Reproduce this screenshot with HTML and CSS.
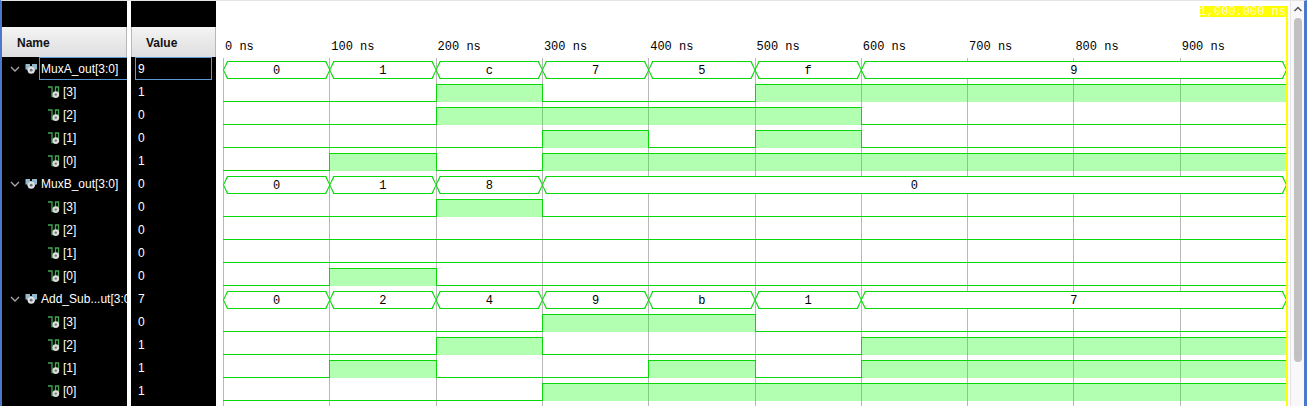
FILE: index.html
```html
<!DOCTYPE html>
<html lang="en">
<head>
<meta charset="utf-8">
<title>Waveform viewer</title>
<link rel="stylesheet" href="styles.css">
</head>
<body>
<svg class="defs" aria-hidden="true">
  <symbol id="chevron" viewBox="0 0 10 10"><path d="M1 3l4 4 4-4" fill="none" stroke="#a8a8a8" stroke-width="1.3"/></symbol>
  <symbol id="bus" viewBox="0 0 12 12">
    <path d="M0.500 1H5v2h2V1h5v5.500H10.500L9 9H3.500L2 6.500H0.500z" fill="#93b9cb"/>
    <circle cx="6.200" cy="7.200" r="3.500" fill="#dfe2e4"/><circle cx="6.200" cy="7.200" r="1.400" fill="#6a7277"/>
  </symbol>
  <symbol id="wire" viewBox="0 0 12 12">
    <path d="M0 1h4v9.500h3M7.500 7V1H10.500V7" fill="none" stroke="#3fa850" stroke-width="1.300"/>
    <circle cx="7.800" cy="8.600" r="3.400" fill="#dcdcdc"/><circle cx="7.800" cy="8.600" r="1.200" fill="#777"/>
  </symbol>
</svg>
<main class="viewer">
  <section class="column names">
    <h2 class="heading">Name</h2>
    <ul class="list">
      <li class="row group selected"><svg class="chevron"><use href="#chevron"/></svg><svg class="icon"><use href="#bus"/></svg><span class="label">MuxA_out[3:0]</span></li>
      <li class="row bit"><svg class="icon"><use href="#wire"/></svg><span class="label">[3]</span></li>
      <li class="row bit"><svg class="icon"><use href="#wire"/></svg><span class="label">[2]</span></li>
      <li class="row bit"><svg class="icon"><use href="#wire"/></svg><span class="label">[1]</span></li>
      <li class="row bit"><svg class="icon"><use href="#wire"/></svg><span class="label">[0]</span></li>
      <li class="row group"><svg class="chevron"><use href="#chevron"/></svg><svg class="icon"><use href="#bus"/></svg><span class="label">MuxB_out[3:0]</span></li>
      <li class="row bit"><svg class="icon"><use href="#wire"/></svg><span class="label">[3]</span></li>
      <li class="row bit"><svg class="icon"><use href="#wire"/></svg><span class="label">[2]</span></li>
      <li class="row bit"><svg class="icon"><use href="#wire"/></svg><span class="label">[1]</span></li>
      <li class="row bit"><svg class="icon"><use href="#wire"/></svg><span class="label">[0]</span></li>
      <li class="row group"><svg class="chevron"><use href="#chevron"/></svg><svg class="icon"><use href="#bus"/></svg><span class="label">Add_Sub...ut[3:0]</span></li>
      <li class="row bit"><svg class="icon"><use href="#wire"/></svg><span class="label">[3]</span></li>
      <li class="row bit"><svg class="icon"><use href="#wire"/></svg><span class="label">[2]</span></li>
      <li class="row bit"><svg class="icon"><use href="#wire"/></svg><span class="label">[1]</span></li>
      <li class="row bit"><svg class="icon"><use href="#wire"/></svg><span class="label">[0]</span></li>
    </ul>
  </section>
  <section class="column values">
    <h2 class="heading">Value</h2>
    <ul class="list">
      <li class="row selected"><span class="label">9</span></li>
      <li class="row"><span class="label">1</span></li>
      <li class="row"><span class="label">0</span></li>
      <li class="row"><span class="label">0</span></li>
      <li class="row"><span class="label">1</span></li>
      <li class="row"><span class="label">0</span></li>
      <li class="row"><span class="label">0</span></li>
      <li class="row"><span class="label">0</span></li>
      <li class="row"><span class="label">0</span></li>
      <li class="row"><span class="label">0</span></li>
      <li class="row"><span class="label">7</span></li>
      <li class="row"><span class="label">0</span></li>
      <li class="row"><span class="label">1</span></li>
      <li class="row"><span class="label">1</span></li>
      <li class="row"><span class="label">1</span></li>
    </ul>
  </section>
  <section class="waves">
    <div class="marker"><span class="flag">1,000.000 ns</span></div>
    <div class="axis">
      <span>0 ns</span><span>100 ns</span><span>200 ns</span><span>300 ns</span><span>400 ns</span><span>500 ns</span><span>600 ns</span><span>700 ns</span><span>800 ns</span><span>900 ns</span>
    </div>
    <div class="lanes">
      <div class="gridlines"><i></i><i></i><i></i><i></i><i></i><i></i><i></i><i></i><i></i><i></i></div>
      <div class="lane"><b class="bus">0</b><b class="bus">1</b><b class="bus">c</b><b class="bus">7</b><b class="bus">5</b><b class="bus">f</b><b class="bus span4">9</b></div>
      <div class="lane"><i class="low span2"></i><i class="high"></i><i class="low span2"></i><i class="high span5 open"></i></div>
      <div class="lane"><i class="low span2"></i><i class="high span4"></i><i class="low span4"></i></div>
      <div class="lane"><i class="low span3"></i><i class="high"></i><i class="low"></i><i class="high"></i><i class="low span4"></i></div>
      <div class="lane"><i class="low"></i><i class="high"></i><i class="low"></i><i class="high span7 open"></i></div>
      <div class="lane"><b class="bus">0</b><b class="bus">1</b><b class="bus">8</b><b class="bus span7">0</b></div>
      <div class="lane"><i class="low span2"></i><i class="high"></i><i class="low span7"></i></div>
      <div class="lane"><i class="low span10"></i></div>
      <div class="lane"><i class="low span10"></i></div>
      <div class="lane"><i class="low"></i><i class="high"></i><i class="low span8"></i></div>
      <div class="lane"><b class="bus">0</b><b class="bus">2</b><b class="bus">4</b><b class="bus">9</b><b class="bus">b</b><b class="bus">1</b><b class="bus span4">7</b></div>
      <div class="lane"><i class="low span3"></i><i class="high span2"></i><i class="low span5"></i></div>
      <div class="lane"><i class="low span2"></i><i class="high"></i><i class="low span3"></i><i class="high span4 open"></i></div>
      <div class="lane"><i class="low"></i><i class="high"></i><i class="low span2"></i><i class="high"></i><i class="low"></i><i class="high span4 open"></i></div>
      <div class="lane"><i class="low span3"></i><i class="high span7 open"></i></div>
    </div>
  </section>
  <div class="scrollbar">
    <svg class="arrow" viewBox="0 0 10 10"><path d="M1.500 7L5 3.500 8.500 7" fill="none" stroke="#555" stroke-width="1.500"/></svg>
    <div class="thumb"></div>
  </div>
</main>
</body>
</html>
```
FILE: styles.css
```css
* { box-sizing: border-box; }
body {
  margin: 0;
  background: #fff;
  font-family: "Liberation Sans", Arial, sans-serif;
  font-size: 12px;
}
.defs { position: absolute; width: 0; height: 0; }
.viewer {
  display: grid;
  grid-template-columns: 125px 4px 85px 1fr 14px;
  height: 100vh;
  margin-right: 2px;
  overflow: hidden;
  border-left: 2px solid #4b78c8;
  border-right: 3px solid #4b78c8;
  border-top: 1px solid #e4e4e4;
}
.column {
  background: #000;
  color: #fff;
  padding-top: 26px;
  overflow: hidden;
}
.names { grid-column: 1; }
.values { grid-column: 3; }
.heading {
  margin: 0;
  height: 30px;
  line-height: 32px;
  padding-left: 15px;
  font-size: 12px;
  color: #111;
  background: linear-gradient(#f4f4f4, #dedee0);
  border-right: 1px solid #b8b8b8;
}
.values .heading { border-left: 1px solid #b8b8b8; padding-left: 14px; }
.list { list-style: none; margin: 0; padding: 0; }
.row {
  display: flex;
  align-items: center;
  height: 23px;
  white-space: nowrap;
}
.group { padding-left: 8px; }
.bit { padding-left: 46px; }
.chevron { width: 10px; height: 10px; margin-right: 5px; flex: none; }
.icon { width: 12px; height: 12px; flex: none; }
.group .label { margin-left: 2px; padding-left: 1px; }
.bit .label { padding-left: 2px; }
.label {
  flex: 1 0 auto;
  height: 23px;
  line-height: 23px;
  border: 1px solid transparent;
}
.values .label { margin: 0 4px; padding-left: 2px; }
.selected .label { border-color: #5b9bd5; }
.names .selected .label { border-right: 0; }
.waves {
  position: relative;
  grid-column: 4;
  display: flex;
  flex-direction: column;
  padding: 0 4px 0 7px;
  font: 12px "Liberation Mono", "Courier New", monospace;
}
.marker {
  position: absolute;
  top: 5px;
  bottom: 0;
  right: 2px;
  border-right: 2px solid #ff0;
  z-index: 2;
}
.flag {
  display: block;
  height: 11px;
  line-height: 13px;
  background: #ff0;
  color: #fffbd0;
}
.axis {
  display: grid;
  grid-template-columns: repeat(10, 1fr);
  height: 56px;
  padding-top: 39px;
  line-height: 14px;
}
.axis span { padding-left: 2px; }
.lanes { position: relative; flex: 1; }
.gridlines {
  position: absolute;
  inset: 1px 0 0;
  display: grid;
  grid-template-columns: repeat(10, 1fr);
}
.gridlines i { border-left: 1px solid #b8b8b8; }
.lane {
  position: relative;
  display: grid;
  grid-template-columns: repeat(10, 1fr);
  grid-template-rows: 18px;
  height: 23px;
  padding-top: 4px;
}
.low { border-bottom: 1px solid #0bd80b; }
.high {
  background: rgba(0, 255, 0, 0.3);
  border: 1px solid #0bd80b;
  border-bottom: 0;
  margin-right: -1px;
}
.open { border-right: 0; margin-right: 0; }
.bus {
  position: relative;
  z-index: 0;
  margin-right: -1px;
  font-weight: 400;
  text-align: center;
  line-height: 20px;
  background: #0bd80b;
  clip-path: polygon(0 50%, 4px 0, calc(100% - 4px) 0, 100% 50%, calc(100% - 4px) 100%, 4px 100%);
}
.bus::before {
  content: "";
  position: absolute;
  z-index: -1;
  inset: 1px;
  background: #fff;
  clip-path: polygon(0 50%, 4px 0, calc(100% - 4px) 0, 100% 50%, calc(100% - 4px) 100%, 4px 100%);
}
.span2 { grid-column: span 2; }
.span3 { grid-column: span 3; }
.span4 { grid-column: span 4; }
.span5 { grid-column: span 5; }
.span7 { grid-column: span 7; }
.span8 { grid-column: span 8; }
.span10 { grid-column: span 10; }
.scrollbar {
  grid-column: 5;
  display: flex;
  flex-direction: column;
  align-items: center;
  background: #f8f8fa;
  border-left: 1px solid #e4e4e6;
}
.arrow { width: 10px; height: 10px; margin: 3px 0 4px; }
.thumb {
  width: 8px;
  height: 85%;
  border-radius: 4px;
  background: #c1c1c1;
}
```
